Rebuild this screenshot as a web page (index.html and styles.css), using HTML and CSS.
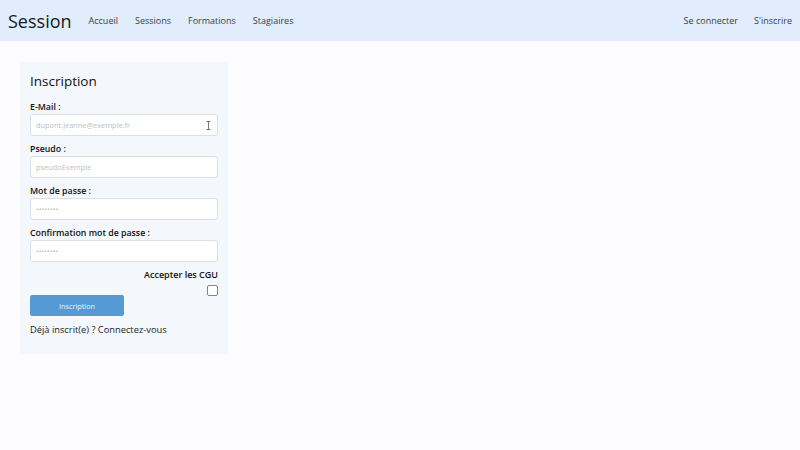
FILE: index.html
```html
<!DOCTYPE html>
<html lang="fr">
<head>
<meta charset="utf-8">
<title>Session</title>
<link rel="stylesheet" href="styles.css">
</head>
<body>
<header class="topbar">
  <div class="brand">Session</div>
  <nav class="nav">
    <a href="#">Accueil</a>
    <a href="#">Sessions</a>
    <a href="#">Formations</a>
    <a href="#">Stagiaires</a>
  </nav>
  <nav class="nav nav-right">
    <a href="#">Se connecter</a>
    <a href="#">S'inscrire</a>
  </nav>
</header>
<main class="main">
  <form class="card">
    <h1 class="title">Inscription</h1>
    <label class="label">E-Mail :</label>
    <div class="field">
      <input class="input" type="text" placeholder="dupont.jeanne@exemple.fr">
      <svg class="cursor" width="5" height="9" viewBox="0 0 5 9"><path d="M0.5 0.5h4M0.5 8.5h4M2.5 0.5v8" stroke="#777" stroke-width="1" fill="none"/></svg>
    </div>
    <label class="label">Pseudo :</label>
    <div class="field"><input class="input" type="text" placeholder="pseudoExemple"></div>
    <label class="label">Mot de passe :</label>
    <div class="field"><input class="input" type="text" placeholder="••••••••"></div>
    <label class="label">Confirmation mot de passe :</label>
    <div class="field"><input class="input" type="text" placeholder="••••••••"></div>
    <div class="cgu">
      <span class="cgu-label">Accepter les CGU</span>
      <span class="checkbox"></span>
    </div>
    <button class="btn" type="button">Inscription</button>
    <p class="already">Déjà inscrit(e) ? Connectez-vous</p>
  </form>
</main>
</body>
</html>
```
FILE: styles.css
```css
* { box-sizing: border-box; }
html, body { margin: 0; padding: 0; }
body {
  background: #fcfbfe;
  font-family: "Open Sans", "DejaVu Sans", sans-serif;
  color: #1a1a1a;
  width: 800px;
  height: 450px;
}
.topbar {
  height: 41px;
  background: #e1edfc;
  display: flex;
  align-items: center;
  padding: 0 8px;
}
.brand {
  font-size: 18px;
  color: #151a22;
  margin-right: 17px;
  line-height: 22px;
}
.nav {
  display: flex;
  gap: 17px;
}
.nav a {
  font-size: 9px;
  color: #3a3f47;
  text-decoration: none;
}
.nav-right { margin-left: auto; gap: 16px; }
.main { padding: 21px 20px; }
.card {
  width: 208px;
  background: #f4f8fd;
  padding: 9px 10px 18px;
  border-radius: 3px;
  display: flex;
  flex-direction: column;
}
.title {
  font-size: 13.5px;
  line-height: 20px;
  font-weight: 500;
  margin: 0 0 10px;
  color: #111;
}
.label {
  font-size: 8.8px;
  line-height: 12px;
  font-weight: 600;
  color: #111;
  margin-bottom: 1px;
}
.field { position: relative; margin-bottom: 7px; }
.input {
  display: block;
  width: 188px;
  height: 22px;
  border: 1px solid #dcdfe4;
  border-radius: 3px;
  background: #fff;
  padding: 0 5px;
  font-family: inherit;
  font-size: 7.4px;
  color: #333;
  outline: none;
}
.input::placeholder { color: #bcbfc4; }
.cursor { position: absolute; right: 7px; top: 7px; }
.cgu {
  display: flex;
  flex-direction: column;
  align-items: flex-end;
  gap: 4px;
}
.cgu-label { font-size: 9px; line-height: 12px; font-weight: 600; color: #111; }
.checkbox {
  width: 11px; height: 11px;
  border: 1px solid #858585;
  border-radius: 2px;
  background: #fff;
}
.btn {
  width: 94px;
  height: 21px;
  margin-top: -1px;
  background: #569ad3;
  border: none;
  border-radius: 2px;
  color: #eaf2fa;
  font-family: inherit;
  font-size: 7.3px;
  padding: 0;
}
.already {
  margin: 8px 0 0;
  font-size: 9.3px;
  line-height: 12px;
  color: #222;
}
```
